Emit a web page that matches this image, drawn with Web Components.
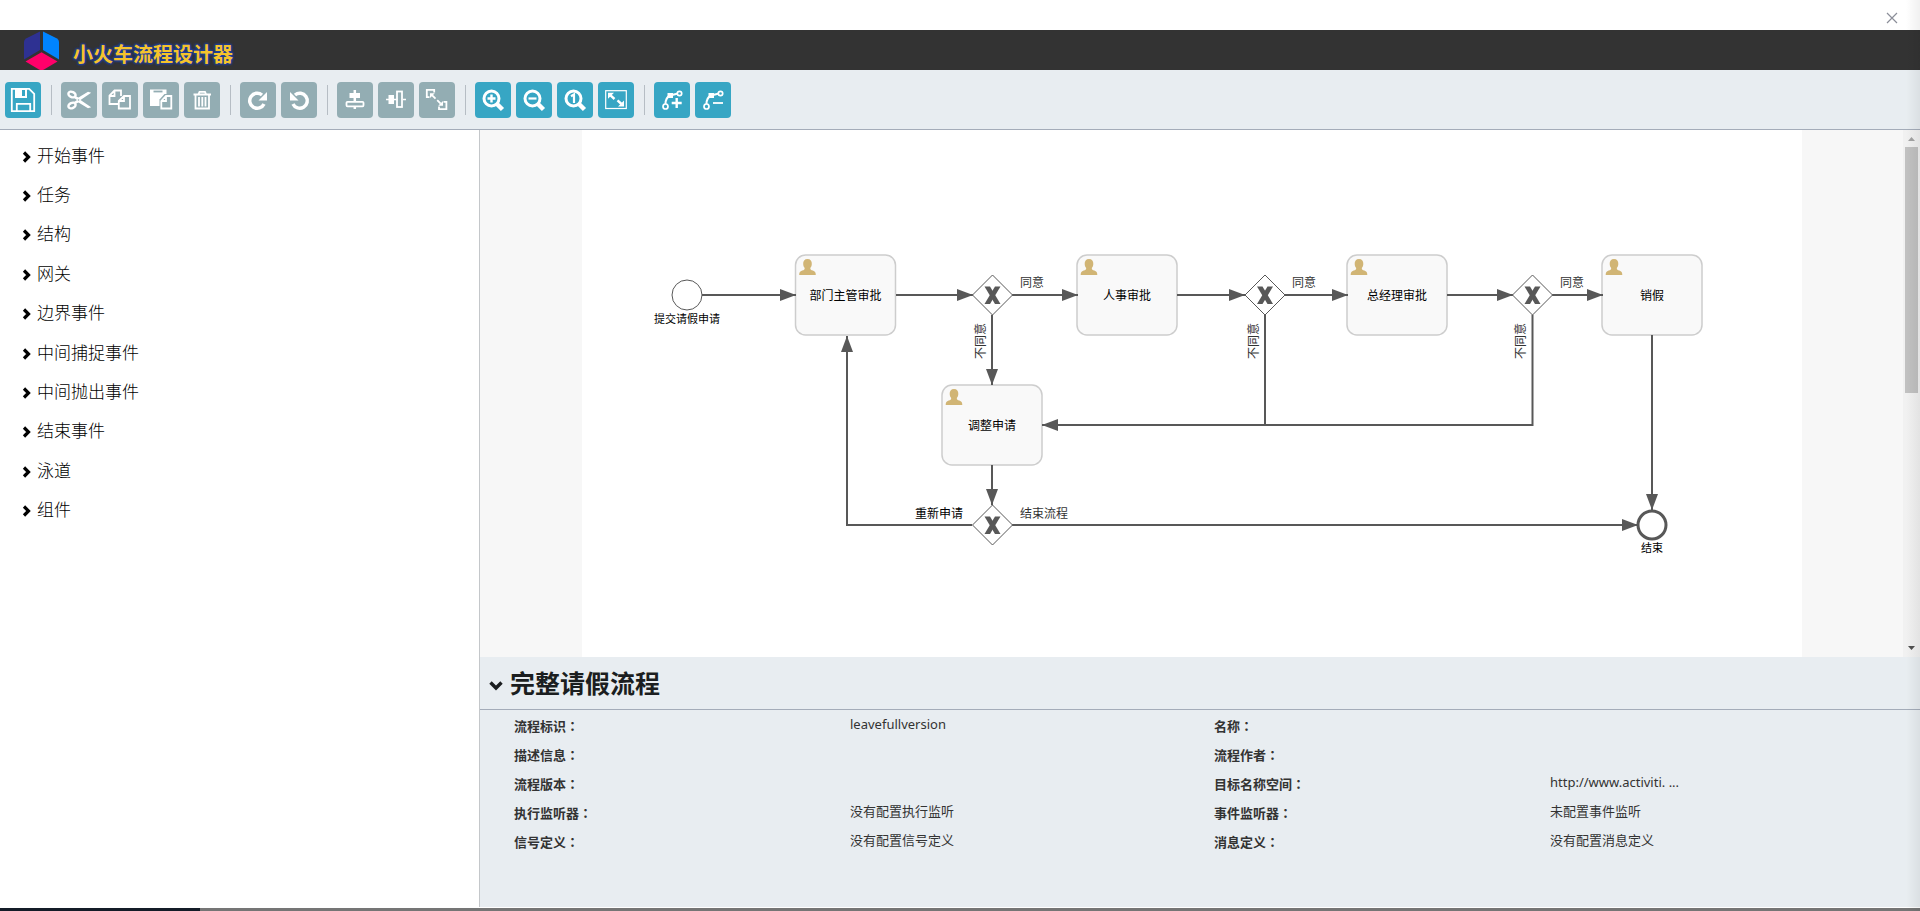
<!DOCTYPE html>
<html lang="zh-CN">
<head>
<meta charset="utf-8">
<title>小火车流程设计器</title>
<style>
  html, body { margin: 0; height: 100%; }
  body { font-family: "Noto Sans", "Noto Sans CJK SC", sans-serif; background: #fff; }
</style>
</head>
<body>
<designer-app></designer-app>

<script>
const define = (name, html, setup) => {
  const template = document.createElement('template');
  template.innerHTML = html;
  customElements.define(name, class extends HTMLElement {
    constructor() {
      super();
      this.attachShadow({ mode: 'open' }).append(template.content.cloneNode(true));
    }
    connectedCallback() { if (setup) setup(this, this.shadowRoot); }
  });
};

/* Toolbar glyphs, drawn on a 36 x 36 grid */
const magnifier = '<circle cx="16.5" cy="16.5" r="7.5" stroke-width="3"/><path d="M22 22l5.5 5.5" stroke-width="4.5"/>';
const bend = '<path d="M11.500 22c0-4 1.500-7 4.500-8.500l8-2" stroke-width="2"/><circle cx="11.500" cy="24.500" r="2.500" stroke-width="1.700"/><circle cx="25.500" cy="11.500" r="2.200" stroke-width="1.700"/><path d="M13.500 11h5.500v5h-5.500z" fill="#fff" stroke="none"/>';
const redo = '<path d="M22.500 13a7.500 7.500 0 1 0 2 9" stroke-width="3.500" transform="translate(-.5 0)"/><path d="M27 10v8.500h-8.500z" fill="#fff" stroke="none"/>';
const ICONS = {
  save: '<path d="M6.800 6.800h17.400l5 5v17.400H6.800z" stroke-width="1.800"/><path d="M10 7h12v9H10z" fill="#fff" stroke="none"/><path d="M17 8h3v6h-3z" fill="#37a6c4" stroke="none"/><path d="M11.800 29v-7.200h13.400V29" stroke-width="1.800"/>',
  cut: '<ellipse cx="11" cy="12.500" rx="3.800" ry="2.600" transform="rotate(25 11 12.500)" stroke-width="2.400"/><ellipse cx="11" cy="23.500" rx="3.800" ry="2.600" transform="rotate(-25 11 23.500)" stroke-width="2.400"/><path d="M13 13.500l4.500 2L27 9.800l3.200 1L19.500 18l10.700 7.200-3.200 1-9.500-5.700-4.500 2v-2.500l3-2-3-2z" fill="#fff" stroke="none"/><circle cx="17.500" cy="18" r=".8" fill="#93adb3" stroke="none"/>',
  copy: '<path d="M17 22H7.500v-8.500L12.500 8.500h6.500v5.500M12.500 8.500v5.500H7.500M16.800 26.500h11.200v-12.500h-6L16.800 19zM22 14v5h-5" stroke-width="1.800"/>',
  paste: '<path d="M7 7.500h16.500V24H7z" fill="#fff" stroke="none"/><path d="M10.500 9.500h9" stroke="#93adb3" stroke-width="1.800"/><path d="M16.500 28.500V17.500l5-5.500h9v16.500z" fill="#93adb3" stroke="none"/><path d="M18.300 26.500h10v-12.500h-5.300l-4.700 5zM23 14v5h-4.500" stroke-width="1.800"/>',
  trash: '<path d="M9.500 12.500h17.500M14.500 12l1-2.200h5.500l1 2.200M11.500 13v13.500h13.500V13M15 15v9.500M18.300 15v9.500M21.500 15v9.500" stroke-width="1.800"/>',
  redo,
  undo: `<g transform="matrix(-1 0 0 1 36 0)">${redo}</g>`,
  alignv: '<path d="M17.800 8v3M17.800 16v3M17.800 25v2" stroke-width="2.500"/><path d="M12.500 11h10.500v5H12.500z" fill="#fff" stroke="none"/><rect x="9.500" y="19.800" width="17" height="4.500" rx="1" stroke-width="1.800"/>',
  alignh: '<path d="M8 17.500h11.500M25 17.500h3" stroke-width="1.500"/><path d="M10.500 13h5.500v9h-5.500z" fill="#fff" stroke="none"/><rect x="19" y="9.500" width="5" height="15.500" stroke-width="1.800"/>',
  same: '<path d="M10.500 15.200H7.800V7.800h7.400v2.700M24.500 19.800h2.900v7.400H20V24.500" stroke-width="1.800"/><path d="M11 11.200h4.800l-4.800 4.800zM24 23.800h-4.800l4.800-4.800z" fill="#fff" stroke="none"/><path d="M13 13.200l3.500 3.500M18.200 18.200l3.500 3.500" stroke-width="1.800"/>',
  zoomin: magnifier + '<path d="M16.500 12.500v8M12.500 16.500h8" stroke-width="2.400"/>',
  zoomout: magnifier + '<path d="M12.500 16.500h8" stroke-width="2.200"/>',
  actual: magnifier + '<path d="M14 14.300l3-1.800v8.500" stroke-width="2.200"/>',
  fit: '<rect x="7.700" y="8.700" width="20.600" height="17.800" stroke-width="1.200"/><path d="M10 10.800h6l-6 6zM26 24.600h-6l6-6z" fill="#fff" stroke="none"/><path d="M12.500 13.300l4 3.700M19.500 18.300l4 3.700" stroke-width="2.400"/>',
  bendadd: bend + '<path d="M22.700 16v10M17.700 21h10" stroke-width="2.400"/>',
  bendremove: bend + '<path d="M18 21h10" stroke-width="1.800"/>'
};

define('tool-button', `
  <style>
    :host { display: block; }
    button { display: block; width: 36px; height: 36px; padding: 0; border: 0; border-radius: 4px; background: #37a6c4; }
    button:disabled { background: #93adb3; }
    svg { display: block; fill: none; stroke: #fff; }
  </style>
  <button type="button"></button>`, (host, root) => {
  const button = root.querySelector('button');
  button.disabled = host.hasAttribute('disabled');
  button.setAttribute('aria-label', host.getAttribute('label'));
  button.innerHTML = `<svg width="36" height="36" viewBox="0 0 36 36">${ICONS[host.getAttribute('icon')]}</svg>`;
});

define('tool-separator', `
  <style>:host { display: block; width: 1px; height: 30px; margin: 0 4px 0 5px; background: #b6bdc4; }</style>`);

define('designer-toolbar', `
  <style>
    :host { display: flex; align-items: center; gap: 5px; padding: 12px 5px 11px; background: #e8edf1; border-bottom: 1px solid #a4acb9; }
  </style>
  <tool-button icon="save" label="保存"></tool-button>
  <tool-separator></tool-separator>
  <tool-button icon="cut" label="剪切" disabled></tool-button>
  <tool-button icon="copy" label="复制" disabled></tool-button>
  <tool-button icon="paste" label="粘贴" disabled></tool-button>
  <tool-button icon="trash" label="删除" disabled></tool-button>
  <tool-separator></tool-separator>
  <tool-button icon="redo" label="重做" disabled></tool-button>
  <tool-button icon="undo" label="撤销" disabled></tool-button>
  <tool-separator></tool-separator>
  <tool-button icon="alignv" label="垂直对齐" disabled></tool-button>
  <tool-button icon="alignh" label="水平对齐" disabled></tool-button>
  <tool-button icon="same" label="相同大小" disabled></tool-button>
  <tool-separator></tool-separator>
  <tool-button icon="zoomin" label="放大"></tool-button>
  <tool-button icon="zoomout" label="缩小"></tool-button>
  <tool-button icon="actual" label="实际大小"></tool-button>
  <tool-button icon="fit" label="适应窗口"></tool-button>
  <tool-separator></tool-separator>
  <tool-button icon="bendadd" label="添加拐点"></tool-button>
  <tool-button icon="bendremove" label="删除拐点"></tool-button>`);

define('window-bar', `
  <style>
    :host { display: flex; justify-content: flex-end; height: 30px; padding-right: 22px; box-sizing: border-box; background: #fff; }
    button { width: 12px; height: 12px; margin-top: 12px; padding: 0; border: 0; background: none; }
    svg { display: block; }
  </style>
  <button type="button" aria-label="关闭">
    <svg width="12" height="12" viewBox="0 0 12 12"><path d="M1 1l10 10M11 1L1 11" stroke="#8b8e99" stroke-width="1.200" fill="none"/></svg>
  </button>`);

define('brand-bar', `
  <style>
    :host { display: flex; gap: 13px; height: 40px; padding-left: 24px; background: #333; }
    h1 { margin: 9px 0 0; font-size: 20px; line-height: 32px; font-weight: 700; color: #f5c32c;
         text-shadow: 1px 1px 2px #1f3f9c, -1px -1px 2px #1f3f9c, 1px -1px 2px #1f3f9c, -1px 1px 2px #1f3f9c; }
    svg { display: block; }
  </style>
  <svg width="36" height="40" viewBox="0 0 36 40">
    <path d="M16 1.500V20L0 29.500V12q0-2.500 2-3.500z" fill="#2e3192"/>
    <path d="M19 1.500l14 7q2 1 2 3.500v17.500L19 20z" fill="#0084ff"/>
    <path d="M17.500 22.300l16 9.200-13.500 8q-2.500 1.500-5 0L1.500 31.500z" fill="#ff006a"/>
  </svg>
  <h1><slot></slot></h1>`);

define('palette-item', `
  <style>
    :host { display: flex; }
    button { display: flex; align-items: center; gap: 6px; padding: 0; border: 0; background: none;
             font: 300 17px/24px "Noto Sans CJK SC", sans-serif; color: #000; }
    svg { display: block; margin-top: 4px; }
  </style>
  <button type="button">
    <svg width="9" height="12" viewBox="0 0 9 12"><path d="M2 1.500L6.500 6 2 10.500" fill="none" stroke="#000" stroke-width="3.200"/></svg>
    <span><slot></slot></span>
  </button>`);

define('shape-palette', `
  <style>
    :host { display: block; box-sizing: border-box; padding: 5px 22px; background: #fff; border-right: 1px solid #c4c7ca; }
    nav { display: grid; grid-auto-rows: 1fr; align-items: center; height: 394px; }
  </style>
  <nav>
    <palette-item>开始事件</palette-item>
    <palette-item>任务</palette-item>
    <palette-item>结构</palette-item>
    <palette-item>网关</palette-item>
    <palette-item>边界事件</palette-item>
    <palette-item>中间捕捉事件</palette-item>
    <palette-item>中间抛出事件</palette-item>
    <palette-item>结束事件</palette-item>
    <palette-item>泳道</palette-item>
    <palette-item>组件</palette-item>
  </nav>`);

/* BPMN diagram model: top-left corners for tasks, centres for gateways */
const TASKS = [
  [213.5, 125, '部门主管审批'], [495, 125, '人事审批'], [765, 125, '总经理审批'],
  [1020, 125, '销假'], [360, 255, '调整申请']
];
const GATEWAYS = [[410.5, 165], [683, 165], [950.5, 165], [410.5, 395]];
const FLOWS = [
  'M120 165H214', 'M314 165H391', 'M430 165H496', 'M595 165H663', 'M703 165H766',
  'M865 165H931', 'M970 165H1021', 'M410 185V255', 'M410 335V375', 'M390 395H265V206',
  'M950.500 185V295H460', 'M1070 205V380', 'M430 395H1056'
];
const task = ([x, y, name]) => `
  <g transform="translate(${x} ${y})">
    <rect width="100" height="80" rx="10" fill="#f9f9f9" stroke="#cdcdcd" stroke-width="1.500"/>
    <path d="M12 4c3 0 4.500 2 4.300 5 0 2-.8 3-1.500 4 0 1.500.8 2 2.500 2.600 2.200.8 3 1.600 3 4.400H3.700c0-2.800.8-3.600 3-4.400 1.700-.6 2.500-1.100 2.500-2.600-.7-1-1.500-2-1.500-4C7.500 6 9 4 12 4z" fill="#d1b575"/>
    <text x="50" y="45" text-anchor="middle">${name}</text>
  </g>`;
const gateway = ([x, y]) => `
  <g transform="translate(${x} ${y})">
    <path d="M0-20L20 0 0 20-20 0z" fill="#fff" stroke="#585858"/>
    <path d="M-8-8.500h5.500L8 9H2.500z" fill="#585858"/>
    <path d="M8-8.500H2.500L-8 9h5.500z" fill="#585858"/>
  </g>`;

define('process-diagram', `
  <style>
    :host { display: block; width: 1220px; background: #fff; overflow: hidden; }
    svg { display: block; font: 12px "Noto Sans CJK SC", sans-serif; fill: #000; }
    .flow { fill: none; stroke: #585858; stroke-width: 2; marker-end: url(#head); }
    .event { font-size: 11px; text-anchor: middle; }
    .soft { fill: #333; }
  </style>
  <svg width="1220" height="527" viewBox="0 0 1220 527">
    <defs><marker id="head" markerUnits="userSpaceOnUse" markerWidth="16" markerHeight="12" refX="16" refY="6" orient="auto"><path d="M0 0l16 6-16 6z" fill="#585858"/></marker></defs>
    <path d="M683 185V295" fill="none" stroke="#585858" stroke-width="2"/>
    ${TASKS.map(task).join('')}
    ${FLOWS.map(d => `<path class="flow" d="${d}"/>`).join('')}
    ${GATEWAYS.map(gateway).join('')}
    <circle cx="105" cy="165" r="15" fill="#fff" stroke="#585858"/>
    <circle cx="1070" cy="395" r="14" fill="#fff" stroke="#585858" stroke-width="3"/>
    <text class="event" x="105" y="193">提交请假申请</text>
    <text class="event" x="1070" y="422">结束</text>
    <text class="soft" x="438" y="157">同意</text>
    <text class="soft" x="710" y="157">同意</text>
    <text class="soft" x="978" y="157">同意</text>
    <text class="soft" transform="translate(403 229) rotate(-90)">不同意</text>
    <text class="soft" transform="translate(676 229) rotate(-90)">不同意</text>
    <text class="soft" transform="translate(943 229) rotate(-90)">不同意</text>
    <text x="333" y="388">重新申请</text>
    <text class="soft" x="438" y="388">结束流程</text>
  </svg>`);

define('scroll-rail', `
  <style>
    :host { display: flex; flex-direction: column; align-items: center; box-sizing: border-box; width: 17px; padding: 7px 0; background: #f1f1f1; }
    i { width: 13px; height: 48%; margin: 6px 0 auto; background: #c1c1c1; }
    svg { display: block; }
  </style>
  <svg width="7" height="4" viewBox="0 0 7 4"><path d="M0 4l3.500-4L7 4z" fill="#a3a3a3"/></svg>
  <i></i>
  <svg width="7" height="4" viewBox="0 0 7 4"><path d="M0 0l3.500 4L7 0z" fill="#505050"/></svg>`);

define('diagram-canvas', `
  <style>
    :host { display: flex; min-height: 0; background: #f7f7f7; }
    main { flex: 1; display: flex; justify-content: center; min-width: 0; overflow: hidden; }
    process-diagram { flex: none; }
  </style>
  <main><process-diagram></process-diagram></main>
  <scroll-rail></scroll-rail>`);

define('property-entry', `
  <style>
    :host { display: contents; }
    dt, dd { margin: 0; font-size: 13px; line-height: 29px; color: #333; }
    dt { font-weight: 700; }
    dt span { font-family: "Noto Sans CJK TC", sans-serif; }
    dd { line-height: 27px; }
  </style>
  <dt></dt><dd><slot></slot></dd>`, (host, root) => {
  root.querySelector('dt').innerHTML = `${host.getAttribute('label')}<span lang="zh-TW">：</span>`;
});

define('property-panel', `
  <style>
    :host { display: block; background: #e8edf1; }
    header { display: flex; align-items: center; height: 52px; border-bottom: 1px solid #a4acb9; padding-left: 9px; }
    h2 { margin: 0; font-size: 25px; line-height: 36px; font-weight: 700; color: #1b1e20; }
    button { display: block; margin: 5px 7px 0 0; padding: 0; border: 0; background: none; }
    svg { display: block; }
    dl { display: grid; grid-template-columns: 24% 26% 24% 26%; grid-auto-rows: 29px; margin: 0; padding: 1px 6px 51px 34px; }
  </style>
  <header>
    <button type="button" aria-label="折叠"><svg width="14" height="10" viewBox="0 0 14 10"><path d="M1.500 1.500L7 7l5.500-5.500" fill="none" stroke="#1b1e20" stroke-width="3.400"/></svg></button>
    <h2>完整请假流程</h2>
  </header>
  <dl>
    <property-entry label="流程标识">leavefullversion</property-entry>
    <property-entry label="名称"></property-entry>
    <property-entry label="描述信息"></property-entry>
    <property-entry label="流程作者"></property-entry>
    <property-entry label="流程版本"></property-entry>
    <property-entry label="目标名称空间">http://www.activiti. ...</property-entry>
    <property-entry label="执行监听器">没有配置执行监听</property-entry>
    <property-entry label="事件监听器">未配置事件监听</property-entry>
    <property-entry label="信号定义">没有配置信号定义</property-entry>
    <property-entry label="消息定义">没有配置消息定义</property-entry>
  </dl>`);

define('load-strip', `
  <style>
    :host { display: flex; height: 3px; margin-top: 1px; background: #757575; }
    i { width: 200px; background: #141c28; }
  </style>
  <i></i>`);

define('designer-app', `
  <style>
    :host { display: flex; flex-direction: column; height: 100vh; overflow: hidden; position: relative; }
    .body { flex: 1; display: grid; grid-template-columns: 25% 1fr; min-height: 0; }
    .work { display: grid; grid-template-rows: 1fr auto; min-width: 0; min-height: 0; }
    .edge { position: absolute; inset: 0 0 0 auto; width: 14px; pointer-events: none;
            background: linear-gradient(to right, rgba(0,0,0,0), rgba(0,0,0,.06)); }
  </style>
  <window-bar></window-bar>
  <brand-bar>小火车流程设计器</brand-bar>
  <designer-toolbar></designer-toolbar>
  <div class="body">
    <shape-palette></shape-palette>
    <div class="work">
      <diagram-canvas></diagram-canvas>
      <property-panel></property-panel>
    </div>
  </div>
  <load-strip></load-strip>
  <div class="edge"></div>`);
</script>
</body>
</html>
